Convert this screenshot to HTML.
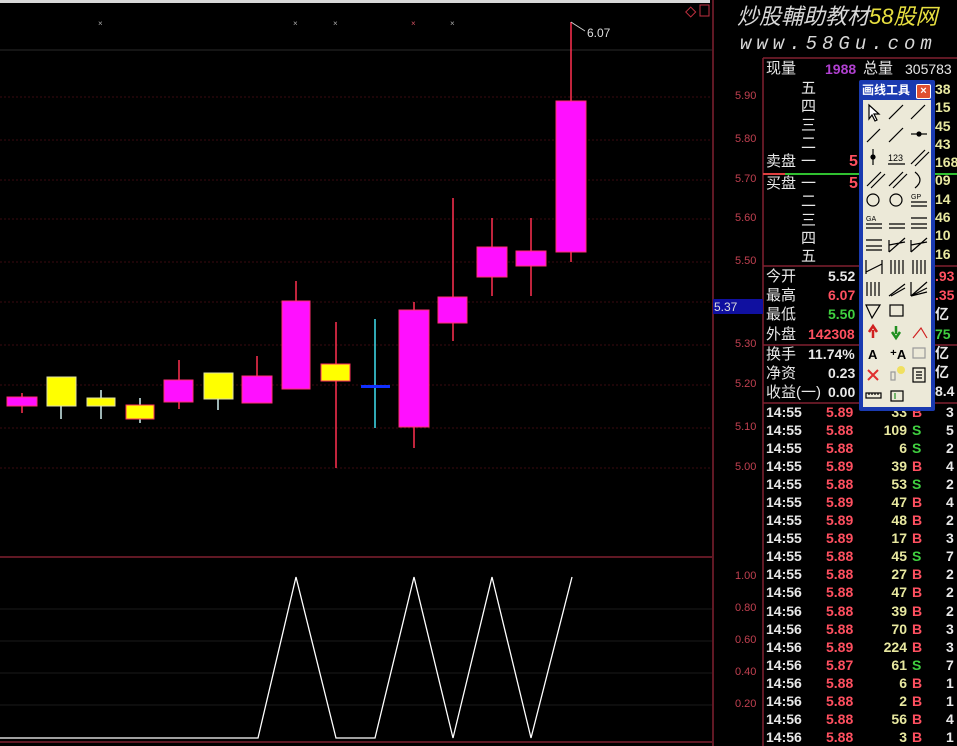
<!DOCTYPE html>
<html><head><meta charset="utf-8">
<style>
body{margin:0;background:#000;width:957px;height:746px;overflow:hidden;position:relative;font-family:"Liberation Sans","Noto Sans CJK SC",sans-serif}
.t{position:absolute;font-size:14px;line-height:18px;white-space:nowrap}
.w{color:#e8e8e8}.r{color:#ff5060}.g{color:#40d040}.y{color:#e8e8a0}.p{color:#b040d0}
.b{font-weight:bold}
.ax{position:absolute;font-size:11px;color:#c04050;left:735px}
</style></head><body>
<svg width="957" height="746" style="position:absolute;left:0;top:0">
<rect x="0" y="0" width="710" height="3" fill="#d8d8d8"/>
<g stroke="#2a2a2a" stroke-width="1">
<line x1="0" y1="50" x2="712" y2="50"/>
</g>
<g stroke="#3a0a10" stroke-dasharray="2,2">
<line x1="0" y1="97" x2="712" y2="97"/><line x1="0" y1="140" x2="712" y2="140"/><line x1="0" y1="180" x2="712" y2="180"/><line x1="0" y1="219" x2="712" y2="219"/><line x1="0" y1="262" x2="712" y2="262"/><line x1="0" y1="302" x2="712" y2="302"/><line x1="0" y1="345" x2="712" y2="345"/><line x1="0" y1="385" x2="712" y2="385"/><line x1="0" y1="428" x2="712" y2="428"/><line x1="0" y1="468" x2="712" y2="468"/>
</g>
<g stroke="#1a1a1a"><line x1="0" y1="609" x2="712" y2="609"/><line x1="0" y1="641" x2="712" y2="641"/><line x1="0" y1="673" x2="712" y2="673"/><line x1="0" y1="705" x2="712" y2="705"/></g>
<g stroke="#802030" stroke-width="1.5">
<line x1="0" y1="557" x2="712" y2="557"/><line x1="0" y1="742" x2="712" y2="742"/>
<line x1="713" y1="0" x2="713" y2="746"/><line x1="763" y1="58" x2="763" y2="746"/>
<line x1="763" y1="58" x2="957" y2="58"/>
<line x1="763" y1="266" x2="957" y2="266"/><line x1="763" y1="345" x2="957" y2="345"/><line x1="763" y1="403" x2="957" y2="403"/>
</g>
<line x1="763" y1="174" x2="957" y2="174" stroke="#30c030" stroke-width="2"/>
<line x1="763" y1="174" x2="785" y2="174" stroke="#e04040" stroke-width="2"/>
<g stroke="#ff3050" stroke-width="1.5">
<line x1="22" y1="393" x2="22" y2="413"/><line x1="179" y1="360" x2="179" y2="409"/><line x1="257" y1="356" x2="257" y2="403"/><line x1="296" y1="281" x2="296" y2="389"/><line x1="414" y1="302" x2="414" y2="448"/><line x1="453" y1="198" x2="453" y2="341"/><line x1="492" y1="218" x2="492" y2="296"/><line x1="531" y1="218" x2="531" y2="296"/><line x1="571" y1="22" x2="571" y2="262"/><line x1="336" y1="322" x2="336" y2="468"/>
</g>
<g stroke="#d0f0f0" stroke-width="1.5"><line x1="61" y1="400" x2="61" y2="419"/><line x1="101" y1="390" x2="101" y2="419"/><line x1="140" y1="398" x2="140" y2="423"/><line x1="218" y1="395" x2="218" y2="410"/></g>
<line x1="375" y1="319" x2="375" y2="428" stroke="#40e0f0" stroke-width="1.5"/>
<g fill="#ff10ff" stroke="#ff3070">
<rect x="7" y="397" width="30" height="9"/><rect x="164" y="380" width="29" height="22"/><rect x="242" y="376" width="30" height="27"/><rect x="282" y="301" width="28" height="88"/><rect x="399" y="310" width="30" height="117"/><rect x="438" y="297" width="29" height="26"/><rect x="477" y="247" width="30" height="30"/><rect x="516" y="251" width="30" height="15"/><rect x="556" y="101" width="30" height="151"/>
</g>
<g fill="#ffff00" stroke="#e0e0a0">
<rect x="47" y="377" width="29" height="29"/><rect x="87" y="398" width="28" height="8"/><rect x="204" y="373" width="29" height="26"/>
</g>
<g fill="#ffff00" stroke="#ff3060"><rect x="321" y="364" width="29" height="17"/><rect x="126" y="405" width="28" height="14"/></g>
<rect x="361" y="385" width="29" height="3" fill="#1030ff"/>
<polyline points="571,22 574,24 585,31" fill="none" stroke="#ccc"/>
<g fill="#aaa" font-size="8"><text x="98" y="26">×</text><text x="293" y="26">×</text><text x="333" y="26">×</text><text x="411" y="26" fill="#d05060">×</text><text x="450" y="26">×</text></g>
<rect x="687" y="8" width="7" height="7" fill="none" stroke="#c03040" transform="rotate(45 690 12)"/>
<rect x="700" y="5" width="9" height="11" fill="none" stroke="#c03040"/>
<polyline points="0,738 258,738 296,577 336,738 375,738 414,577 453,738 492,577 531,738 572,577" fill="none" stroke="#fff" stroke-width="1.3"/>
<rect x="713" y="299" width="50" height="15" fill="#1010a0"/>
</svg>
<div class="t" style="left:714px;top:298px;font-size:12px;color:#ddd">5.37</div>
<div class="t" style="left:587px;top:24px;font-size:12px;color:#ddd">6.07</div>
<div class="ax" style="top:90px">5.90</div><div class="ax" style="top:133px">5.80</div><div class="ax" style="top:173px">5.70</div><div class="ax" style="top:212px">5.60</div><div class="ax" style="top:255px">5.50</div><div class="ax" style="top:338px">5.30</div><div class="ax" style="top:378px">5.20</div><div class="ax" style="top:421px">5.10</div><div class="ax" style="top:461px">5.00</div>
<div class="ax" style="top:570px">1.00</div><div class="ax" style="top:602px">0.80</div><div class="ax" style="top:634px">0.60</div><div class="ax" style="top:666px">0.40</div><div class="ax" style="top:698px">0.20</div>
<div class="t" style="left:737px;top:4px;font-size:22px;line-height:26px;font-style:italic;color:#d8d8d8">炒股輔助教材<span style="color:#e8e040">58股网</span></div>
<div class="t" style="left:740px;top:32px;font-size:19px;line-height:24px;font-style:italic;color:#d8d8d8;letter-spacing:5px;font-family:'Liberation Mono',monospace">www.58Gu.com</div>
<div class="t w" style="left:766px;top:60px;font-size:15px">现量</div><div class="t p b" style="left:825px;top:60px">1988</div>
<div class="t w" style="left:863px;top:60px;font-size:15px">总量</div><div class="t w" style="left:905px;top:60px">305783</div>
<div class="t w" style="left:801px;top:80px;font-size:15px;line-height:18.3px">五<br>四<br>三<br>二<br>一</div>
<div class="t w" style="left:766px;top:153px;font-size:15px">卖盘</div>
<div class="t w" style="left:766px;top:175px;font-size:15px">买盘</div>
<div class="t w" style="left:801px;top:175px;font-size:15px;line-height:18.3px">一<br>二<br>三<br>四<br>五</div>
<div class="t r b" style="left:849px;top:153px;font-size:16px">5</div><div class="t r b" style="left:849px;top:175px;font-size:16px">5</div>
<div class="t y b" style="left:935px;top:80px;line-height:18.3px">38<br>15<br>45<br>43<br>168<br>09<br>14<br>46<br>10<br>16</div>
<div class="t w" style="left:766px;top:267px;font-size:15px;line-height:19.2px">今开<br>最高<br>最低<br>外盘</div>
<div class="t b" style="left:828px;top:267px;line-height:19.2px"><span class="w">5.52</span><br><span class="r">6.07</span><br><span class="g">5.50</span><br><span class="r" style="margin-left:-20px">142308</span></div>
<div class="t w" style="left:766px;top:345px;font-size:15px;line-height:19.2px">换手<br>净资<br>收益(一)</div>
<div class="t w b" style="left:808px;top:345px;line-height:19.2px">11.74%<br><span style="margin-left:20px">0.23</span><br><span style="margin-left:20px">0.00</span></div>
<div class="t b" style="left:935px;top:267px;line-height:19.2px"><span class="r">.93</span><br><span class="r">.35</span><br><span class="w">亿</span><br><span class="g">75</span><br><span class="w">亿</span><br><span class="w">亿</span><br><span class="w">8.4</span></div>
<div class="t b" style="left:766px;top:403px;line-height:18.05px;color:#e8e8e8">14:55<br>14:55<br>14:55<br>14:55<br>14:55<br>14:55<br>14:55<br>14:55<br>14:55<br>14:55<br>14:56<br>14:56<br>14:56<br>14:56<br>14:56<br>14:56<br>14:56<br>14:56<br>14:56</div>
<div class="t r b" style="left:826px;top:403px;line-height:18.05px">5.89<br>5.88<br>5.88<br>5.89<br>5.88<br>5.89<br>5.89<br>5.89<br>5.88<br>5.88<br>5.88<br>5.88<br>5.88<br>5.89<br>5.87<br>5.88<br>5.88<br>5.88<br>5.88</div>
<div class="t y b" style="left:870px;top:403px;width:37px;text-align:right;line-height:18.05px">33<br>109<br>6<br>39<br>53<br>47<br>48<br>17<br>45<br>27<br>47<br>39<br>70<br>224<br>61<br>6<br>2<br>56<br>3</div>
<div class="t b" style="left:912px;top:403px;line-height:18.05px"><span class="r">B</span><br><span class="g">S</span><br><span class="g">S</span><br><span class="r">B</span><br><span class="g">S</span><br><span class="r">B</span><br><span class="r">B</span><br><span class="r">B</span><br><span class="g">S</span><br><span class="r">B</span><br><span class="r">B</span><br><span class="r">B</span><br><span class="r">B</span><br><span class="r">B</span><br><span class="g">S</span><br><span class="r">B</span><br><span class="r">B</span><br><span class="r">B</span><br><span class="r">B</span></div>
<div class="t w b" style="left:946px;top:403px;line-height:18.05px">3<br>5<br>2<br>4<br>2<br>4<br>2<br>3<br>7<br>2<br>2<br>2<br>3<br>3<br>7<br>1<br>1<br>4<br>1</div>
<div style="position:absolute;left:859px;top:80px;width:76px;height:331px;background:#1a3ab0;border-radius:2px"></div>
<div style="position:absolute;left:863px;top:100px;width:68px;height:307px;background:#ece9d8"></div>
<div class="t" style="left:862px;top:82px;font-size:12px;line-height:16px;color:#fff;font-weight:bold">画线工具</div>
<div style="position:absolute;left:916px;top:84px;width:13px;height:13px;background:#e05030;border:1px solid #fff;border-radius:2px;color:#fff;font-size:11px;line-height:13px;text-align:center;font-weight:bold">×</div>
<svg width="68" height="307" style="position:absolute;left:863px;top:100px" fill="none" stroke="#000" stroke-width="1.2">
<path d="M6 5 L6 19 L9 15 L12 21 L14 20 L11 14 L16 14 Z" fill="#fff"/>
<path d="M26 19 L40 5"/><path d="M48 19 L62 5"/>
<path d="M4 42 L17 29"/><path d="M26 42 L40 28"/><path d="M48 34 L64 34"/><circle cx="56" cy="34" r="2" fill="#000"/>
<path d="M10 49 L10 65"/><circle cx="10" cy="57" r="2" fill="#000"/><text x="25" y="61" font-size="9" fill="#000" stroke="none">123</text><path d="M25 64 L42 64"/><path d="M48 64 L62 50 M52 66 L66 52"/>
<path d="M4 86 L18 72 M8 88 L22 74"/><path d="M26 86 L40 72 M30 88 L44 74"/><path d="M52 72 Q62 80 52 88"/>
<circle cx="10" cy="100" r="6"/><circle cx="33" cy="100" r="6"/><text x="48" y="99" font-size="7" fill="#000" stroke="none">GP</text><path d="M48 102 L64 102 M48 106 L64 106"/>
<text x="3" y="121" font-size="7" fill="#000" stroke="none">GA</text><path d="M3 124 L19 124 M3 128 L19 128"/><path d="M26 124 L42 124 M26 128 L42 128"/><path d="M48 118 L64 118 M48 124 L64 124 M48 128 L64 128"/>
<path d="M3 140 L19 140 M3 146 L19 146 M3 150 L19 150"/><path d="M26 152 L42 138 M26 145 L42 142 M26 140 L26 152"/><path d="M48 152 L64 138 M48 145 L64 142 M48 140 L48 152"/>
<path d="M3 160 L3 174 M19 160 L19 174 M3 172 L19 164"/><path d="M28 160 L28 174 M32 160 L32 174 M36 160 L36 174 M40 160 L40 174"/><path d="M50 160 L50 174 M54 160 L54 174 M58 160 L58 174 M62 160 L62 174"/>
<path d="M4 182 L4 196 M8 182 L8 196 M12 182 L12 196 M16 182 L16 196"/><path d="M26 196 L42 184 M28 196 L42 188"/><path d="M48 196 L64 182 M48 196 L64 188 M48 196 L64 192 M48 182 L48 196"/>
<path d="M3 205 L17 205 L9 218 Z"/><rect x="27" y="205" width="13" height="11"/>
<path d="M10 238 L10 230 M6 232 L10 226 L14 232" stroke="#d02020" stroke-width="2.5"/><path d="M33 226 L33 234 M29 232 L33 238 L37 232" stroke="#209020" stroke-width="2.5"/><path d="M50 238 L58 228 L64 238" stroke="#d02020"/>
<text x="5" y="259" font-size="13" font-weight="bold" fill="#000" stroke="none">A</text><text x="27" y="259" font-size="13" font-weight="bold" fill="#000" stroke="none">⁺A</text><rect x="50" y="248" width="12" height="10" stroke="#999"/>
<path d="M5 270 L15 280 M15 270 L5 280" stroke="#e03030" stroke-width="2"/><rect x="28" y="272" width="4" height="8" stroke="#999"/><circle cx="38" cy="270" r="4" fill="#f0e060" stroke="none"/><rect x="50" y="268" width="12" height="14"/><path d="M53 272 L59 272 M53 275 L59 275 M53 278 L59 278"/>
<rect x="3" y="293" width="15" height="5"/><path d="M6 293 L6 295 M9 293 L9 295 M12 293 L12 295 M15 293 L15 295"/><rect x="28" y="291" width="12" height="10"/><path d="M32 293 L32 299" stroke="#209020"/>
</svg>
</body></html>
